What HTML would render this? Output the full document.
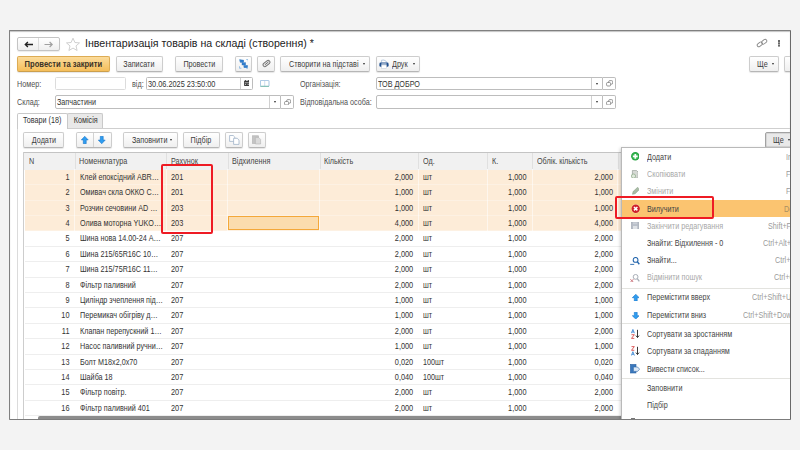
<!DOCTYPE html>
<html lang="uk"><head><meta charset="utf-8"><title>Інвентаризація товарів на складі</title>
<style>
html,body{margin:0;padding:0}
body{width:800px;height:450px;overflow:hidden;background:#f3f3f3;font-family:"Liberation Sans",sans-serif;font-size:8.3px;color:#3a3a3a;position:relative}
#win{position:absolute;left:9px;top:30px;width:780px;height:388px;border:1px solid #808080;border-right-color:#6a6a6a;border-bottom-color:#7c7c7c;box-shadow:inset 0 1px 1px #c4c4c4;background:#fff;overflow:hidden;border-radius:1px}
#in{position:absolute;left:-10px;top:-31px;width:800px;height:450px}
#in *{box-sizing:border-box}
.a{position:absolute;white-space:nowrap}
.btn{position:absolute;height:15.7px;top:56.1px;border:1px solid #cdcdcd;border-bottom-color:#b6b6b6;border-radius:2px;background:linear-gradient(#ffffff,#efefef);text-align:center;line-height:14.4px;white-space:nowrap;color:#3c3c3c;box-shadow:0 1px 1px rgba(0,0,0,.10)}
.btn.y{background:linear-gradient(#fcdc9c,#f5be5a);border-color:#ddac54;border-bottom-color:#cc9f4c;font-weight:bold;color:#3a3226}
.btn.t2{top:132.2px;height:15.4px;line-height:14.2px}
.lbl{position:absolute;white-space:nowrap;color:#505050;line-height:13px;margin-top:1px}
.fld{position:absolute;height:13.4px;border:1px solid #bdbdbd;border-radius:1.5px;background:#fff;line-height:12.8px;padding-left:1px;white-space:nowrap;color:#333}
.fb{position:absolute;height:13.4px;border:1px solid #bdbdbd;border-left:none;background:#fff;border-radius:0 2px 2px 0}
.dd{position:absolute;width:0;height:0;border-left:1.7px solid transparent;border-right:1.7px solid transparent;border-top:2.2px solid #2e2e2e}
#title{position:absolute;left:85px;top:35.4px;font-size:11.1px;line-height:17px;color:#1c1c1c;transform:scaleX(.957);transform-origin:0 50%;white-space:nowrap}
.tab{position:absolute;top:113.1px;height:14.6px;border:1px solid #c9c9c9;border-bottom:none;border-radius:2px 2px 0 0;line-height:13px;text-align:center;color:#333}
#hdr{position:absolute;left:23.4px;top:152.3px;width:770px;height:17.5px;background:#f1f1f1;border-top:1px solid #c4c4c4;border-left:1px solid #c4c4c4}
#hdr span{position:absolute;top:0;height:16px;line-height:16.2px;padding-left:3.6px;border-left:1px solid #e0e0e0;color:#444}
#hdr span:first-child{border-left:none;padding-left:4.6px}
.tr{position:absolute;left:24.5px;width:600px;height:15.4px;border-bottom:1px solid #eeeeee;background:#fff;line-height:15.4px;color:#333}
.tr.sel{background:#fdecd8;border-bottom-color:#fdf1e3}
.c{position:absolute;top:.1px;white-space:nowrap}
.n{left:0;width:44.5px;text-align:right}
.nm{left:55px}
.ac{left:146.5px}
.q{left:295px;width:93.2px;text-align:right}
.u{left:398px}
.k{left:462px;width:39.5px;text-align:right}
.oq{left:507px;width:81px;text-align:right}
#menu{position:absolute;left:620.5px;top:147px;width:200px;height:290px;background:#fff;border:1px solid #b9b9b9;box-shadow:-1px 1px 3px rgba(0,0,0,.18);z-index:4}
.mi{position:absolute;left:0;width:200px;height:17.2px;line-height:17.2px;color:#454545}
.mi .t{position:absolute;left:25.6px;top:.4px;white-space:nowrap}
.mi.d .t{color:#a8a8a8}
.mi .sk{position:absolute;top:.4px;color:#9a9a9a;white-space:nowrap}
#menu svg.ic{position:absolute}
.ms{position:absolute;left:0;width:200px;height:1px;background:#e3e3df}
.red{position:absolute;z-index:5;border:2px solid #ee1b24;border-radius:2px}
svg.a{z-index:3}

.x{display:inline-block;transform:scaleX(.868);transform-origin:50% 50%;font-style:normal;white-space:nowrap}
.x.l{transform-origin:0 50%}
.lbl,.c,.mi .t,.mi .sk{transform:scaleX(.868);transform-origin:0 50%}
.c.n,.c.ac,.c.q,.c.k,.c.oq,.x.dg{transform:scaleX(.885)}
.c.n,.c.q,.c.k,.c.oq{transform-origin:100% 50%}
.vs{position:absolute;top:169.3px;width:1px;height:62px;background:rgba(255,255,255,.55);z-index:1}
.hl{position:absolute;left:0;width:200px;height:17px;background:#fbc470}

</style></head><body>
<div id="win">
<div id="in">
<!-- title bar -->
<div class="a" style="left:17px;top:37px;width:42.6px;height:14px;border:1px solid #c4c4c4;border-radius:2px;background:linear-gradient(#fff,#efefef);box-shadow:0 1px 1px rgba(0,0,0,.08)"></div>
<div class="a" style="left:38px;top:38px;width:1px;height:12px;background:#dcdcdc"></div>
<svg class="a" style="left:23.600px;top:40.600px" width="9.500" height="7" viewBox="0 0 9.500 7"><path d="M9 3.500H1.600M3.900 1L1.300 3.500l2.600 2.500" fill="none" stroke="#222" stroke-width="1.350"/></svg>
<svg class="a" style="left:43.800px;top:40.600px" width="9.500" height="7" viewBox="0 0 9.500 7"><path d="M.5 3.500h7.400M5.600 1l2.600 2.500-2.600 2.500" fill="none" stroke="#a0a0a0" stroke-width="1.200"/></svg>
<svg class="a" style="left:64.900px;top:37px" width="16" height="15" viewBox="0 0 16 15"><path d="M8 1.2l1.9 4.3 4.6.4-3.5 3 1.1 4.6L8 11.1 3.9 13.5 5 8.9l-3.500-3 4.600-.4z" fill="#fff" stroke="#c9c9c9" stroke-width="0.9"/></svg>
<div id="title">Інвентаризація товарів на складі (створення) *</div>
<svg class="a" style="left:756px;top:38px" width="12" height="11" viewBox="0 0 13 12"><g fill="none" stroke="#8a8a8a" stroke-width="1"><rect x="1" y="5.2" width="6.200" height="3.600" rx="1.800" transform="rotate(-38 4 7)"/><rect x="5.800" y="2.200" width="6.200" height="3.600" rx="1.800" transform="rotate(-38 9 4)"/></g></svg>
<div class="a" style="left:777.800px;top:40.100px;width:2.200px;height:1.700px;background:#6a6a6a;box-shadow:0 2.300px 0 #6a6a6a,0 4.600px 0 #6a6a6a"></div>

<!-- command bar -->
<div class="btn y" style="left:17px;width:93.3px"><span class="x" style="transform:scaleX(.915)">Провести та закрити</span></div>
<div class="btn" style="left:115.6px;width:47px"><span class="x">Записати</span></div>
<div class="btn" style="left:174.6px;width:48.6px"><span class="x">Провести</span></div>
<div class="btn" style="left:234.8px;width:17.3px"></div>
<div class="btn" style="left:257.3px;width:17.3px"></div>
<div class="btn" style="left:280.2px;width:90px;text-align:left;padding-left:7.500px"><span class="x l">Створити на підставі</span></div>
<div class="dd" style="left:363px;top:63px"></div>
<div class="btn" style="left:375.6px;width:44.6px;text-align:left;padding-left:15.900px"><span class="x l">Друк</span></div>
<div class="dd" style="left:412.500px;top:63px"></div>
<div class="btn" style="left:749px;width:29.800px;text-align:left;padding-left:7px"><span class="x l">Ще</span></div>
<div class="dd" style="left:771.700px;top:63px"></div>
<div class="btn" style="left:784.3px;width:20px"></div>


<!-- icon: structure -->
<svg class="a" style="left:238.600px;top:59.300px" width="9.600" height="9.600" viewBox="0 0 9.600 9.600"><path d="M.4 2.400V.4h2M7.200.4h2v2M9.200 7.200v2h-2M2.400 9.200h-2v-2" fill="none" stroke="#7fb2e0" stroke-width=".8"/><g fill="#2f7fd0" stroke="#2a6cb8" stroke-width=".4"><rect x="1.100" y="1" width="3.600" height="2.300"/><rect x="3" y="3.700" width="3.600" height="2.300"/><rect x="4.900" y="6.400" width="3.600" height="2.300"/></g></svg>
<!-- icon: paperclip -->
<svg class="a" style="left:261.600px;top:59.400px" width="9" height="9" viewBox="0 0 9 9"><g transform="rotate(-40 4.500 4.500)"><rect x="0.600" y="2.700" width="7.800" height="3.600" rx="1.800" fill="#e6e6e6" stroke="#747474" stroke-width="1"/><path d="M2.600 4.500h4.400" stroke="#747474" stroke-width=".9"/></g></svg>
<!-- icon: printer -->
<svg class="a" style="left:379.300px;top:59px" width="10" height="10" viewBox="0 0 10 10"><path d="M2.600 3.600V1.200q2.400-1 4.800 1.300v1.100" fill="#fff" stroke="#9bb4d2" stroke-width=".7"/><rect x="0.400" y="3.600" width="9.200" height="4.200" rx="1.300" fill="#1f4f8f"/><rect x="2.500" y="6" width="5" height="3.600" fill="#fff" stroke="#b9c6d6" stroke-width=".5"/><rect x="2.400" y="4.500" width="5.200" height="1" fill="#fff"/></svg>
<!-- icon: calendar -->
<svg class="a" style="left:243.600px;top:80.300px" width="5.700" height="6" viewBox="0 0 6 6.500"><rect x="0" y="0.800" width="6" height="5.600" rx=".6" fill="#3a3a3a"/><rect x="0.900" y="0" width="1" height="1.600" fill="#3a3a3a"/><rect x="4.100" y="0" width="1" height="1.600" fill="#3a3a3a"/><rect x="0.800" y="2.700" width="4.400" height=".7" fill="#ddd"/><rect x="0.900" y="4.200" width="1.300" height="1.200" fill="#bbb"/><rect x="3.800" y="4.200" width="1.300" height="1.200" fill="#bbb"/></svg>
<!-- icon: book -->
<svg class="a" style="left:260px;top:80px" width="9.500" height="7" viewBox="0 0 9.500 7"><rect x="0.400" y="0.400" width="8.600" height="6" rx=".6" fill="#fff" stroke="#8fb6dc" stroke-width=".8"/><path d="M4.700 .6v5.600" stroke="#b9d0e8" stroke-width=".7"/><path d="M.4 6.300h8.600" stroke="#78c0a8" stroke-width=".9"/></svg>
<!-- open icons -->
<svg class="a" style="left:605.7px;top:80.4px" width="7.400" height="6.800" viewBox="0 0 8 7"><g fill="#fff" stroke="#7a7a7a" stroke-width=".85"><rect x="2.900" y=".5" width="4.400" height="3.800" rx="1.200"/><rect x=".6" y="2.500" width="4.400" height="3.800" rx="1.200"/></g></svg><svg class="a" style="left:605.7px;top:98.6px" width="7.400" height="6.800" viewBox="0 0 8 7"><g fill="#fff" stroke="#7a7a7a" stroke-width=".85"><rect x="2.900" y=".5" width="4.400" height="3.800" rx="1.200"/><rect x=".6" y="2.500" width="4.400" height="3.800" rx="1.200"/></g></svg><svg class="a" style="left:283.8px;top:98.7px" width="7.400" height="6.800" viewBox="0 0 8 7"><g fill="#fff" stroke="#7a7a7a" stroke-width=".85"><rect x="2.900" y=".5" width="4.400" height="3.800" rx="1.200"/><rect x=".6" y="2.500" width="4.400" height="3.800" rx="1.200"/></g></svg>

<!-- icon: arrows -->
<svg class="a" style="left:81px;top:136px" width="7.500" height="8" viewBox="0 0 7.500 8"><path d="M3.750.3L7.200 3.900H5.200V7.700H2.300V3.900H.3z" fill="#2f9df0" stroke="#1976c9" stroke-width=".6"/></svg>
<svg class="a" style="left:98.300px;top:136px" width="7.500" height="8" viewBox="0 0 7.500 8"><path d="M3.750 7.700L7.200 4.100H5.200V.3H2.300V4.100H.3z" fill="#2f9df0" stroke="#1976c9" stroke-width=".6"/></svg>
<!-- icon: copy -->
<svg class="a" style="left:228.500px;top:135px" width="11" height="10" viewBox="0 0 11 10"><g fill="#fff" stroke="#9fb3c8" stroke-width=".8"><path d="M.6.500h3.600l1.600 1.600v4.300H.6z"/><path d="M4.600 3.300h3.600l1.800 1.800v4.300H4.600z"/></g></svg>
<!-- icon: paste disabled -->
<svg class="a" style="left:252px;top:135px" width="9.500" height="9.500" viewBox="0 0 9.500 9.500"><rect x=".5" y=".8" width="6" height="7.600" fill="#c4c4c4" stroke="#aeaeae" stroke-width=".6"/><path d="M3.400 2.400h3.200l2 2v4.600H3.400z" fill="#dadada" stroke="#b4b4b4" stroke-width=".6"/></svg>

<!-- form row 1 -->
<div class="lbl" style="left:17px;top:77.3px">Номер:</div>
<div class="fld" style="left:54.600px;top:77px;width:71.400px;border-color:#dcdcdc"></div>
<div class="lbl" style="left:132px;top:77.3px">від:</div>
<div class="fld" style="left:146.200px;top:77px;width:106.400px;padding-left:.6px"><span class="x l dg">30.06.2025 23:50:00</span></div>
<div class="a" style="left:240px;top:78px;width:1px;height:11.4px;background:#d0d0d0"></div>
<div class="lbl" style="left:300px;top:77.3px">Організація:</div>
<div class="fld" style="left:376px;top:77px;width:227.300px;border-radius:2px 0 0 2px"><span class="x l">ТОВ ДОБРО</span></div>
<div class="a" style="left:591.200px;top:78px;width:1px;height:11.4px;background:#d0d0d0"></div>
<div class="dd" style="left:595.700px;top:82.600px"></div>
<div class="fb" style="left:603.300px;top:77px;width:12.500px"></div>

<!-- form row 2 -->
<div class="lbl" style="left:17px;top:94.700px">Склад:</div>
<div class="fld" style="left:54.500px;top:95px;width:226.800px;height:13.700px;border-radius:2px 0 0 2px"><span class="x l">Запчастини</span></div>
<div class="a" style="left:269.400px;top:96.4px;width:1px;height:11.4px;background:#d0d0d0"></div>
<div class="dd" style="left:273.700px;top:101px"></div>
<div class="fb" style="left:281.300px;top:95px;width:12.600px;height:13.700px"></div>
<div class="lbl" style="left:300px;top:94.700px">Відповідальна особа:</div>
<div class="fld" style="left:376px;top:95.2px;width:227.300px;height:13.500px;border-radius:2px 0 0 2px"></div>
<div class="a" style="left:591.200px;top:96.4px;width:1px;height:11.4px;background:#d0d0d0"></div>
<div class="dd" style="left:595.700px;top:101px"></div>
<div class="fb" style="left:603.300px;top:95.2px;width:12.500px;height:13.500px"></div>

<!-- tabs -->
<div class="a" style="left:17px;top:127.600px;width:780px;height:1px;background:#cfcfcf"></div>
<div class="a" style="left:16.800px;top:127.600px;width:1.200px;height:300px;background:#dbdbdb"></div>
<div class="tab" style="left:67.3px;width:36px;background:#e9e9e9"><span class="x">Комісія</span></div>
<div class="tab" style="left:17px;width:51px;background:#fff;height:15.700px"><span class="x">Товари (18)</span></div>

<!-- table toolbar -->
<div class="btn t2" style="left:23.300px;width:40.600px"><span class="x">Додати</span></div>
<div class="btn t2" style="left:76px;width:35.6px"></div>
<div class="a" style="left:93.2px;top:133.2px;width:1px;height:13.4px;background:#d2d2d2"></div>
<div class="btn t2" style="left:123px;width:54.6px;text-align:left;padding-left:7.500px"><span class="x l">Заповнити</span></div>
<div class="dd" style="left:170px;top:139.2px"></div>
<div class="btn t2" style="left:182.8px;width:36.8px"><span class="x">Підбір</span></div>
<div class="btn t2" style="left:225.2px;width:17.6px"></div>
<div class="btn t2" style="left:248px;width:17.6px"></div>
<div class="btn t2" style="left:765.300px;width:40px;background:#e9e9e9;border-color:#a2a2a2;text-align:left;padding-left:6.900px;box-shadow:inset 0 0 0 1px #d6d6d6"><span class="x l">Ще</span></div>
<div class="dd" style="left:788.200px;top:139.200px"></div>

<!-- table header -->
<div id="hdr">
<span style="left:0;width:50.5px"><i class="x l">N</i></span>
<span style="left:50.3px;width:92px"><i class="x l">Номенклатура</i></span>
<span style="left:141.8px;width:62px"><i class="x l">Рахунок</i></span>
<span style="left:203.5px;width:92px"><i class="x l">Відхилення</i></span>
<span style="left:295.5px;width:98px"><i class="x l">Кількість</i></span>
<span style="left:393.8px;width:69px"><i class="x l">Од.</i></span>
<span style="left:462.8px;width:45px"><i class="x l">К.</i></span>
<span style="left:507.800px;width:86px"><i class="x l">Облік. кількість</i></span>
<span style="left:593.3px;width:180px"></span>
</div>

<div id="rows">
<div class="tr sel" style="top:169.80px"><span class="c n">1</span><span class="c nm">Клей епоксідний ABR…</span><span class="c ac">201</span><span class="c q">2,000</span><span class="c u">шт</span><span class="c k">1,000</span><span class="c oq">2,000</span></div>
<div class="tr sel" style="top:185.20px"><span class="c n">2</span><span class="c nm">Омивач скла ОККО С…</span><span class="c ac">201</span><span class="c q">1,000</span><span class="c u">шт</span><span class="c k">1,000</span><span class="c oq">1,000</span></div>
<div class="tr sel" style="top:200.60px"><span class="c n">3</span><span class="c nm">Розчин сечовини AD …</span><span class="c ac">203</span><span class="c q">1,000</span><span class="c u">шт</span><span class="c k">1,000</span><span class="c oq">1,000</span></div>
<div class="tr sel" style="top:216.00px"><span class="c n">4</span><span class="c nm">Олива моторна YUKO…</span><span class="c ac">203</span><span class="c q">4,000</span><span class="c u">шт</span><span class="c k">1,000</span><span class="c oq">4,000</span></div>
<div class="tr" style="top:231.40px"><span class="c n">5</span><span class="c nm">Шина нова 14.00-24 A…</span><span class="c ac">207</span><span class="c q">2,000</span><span class="c u">шт</span><span class="c k">1,000</span><span class="c oq">2,000</span></div>
<div class="tr" style="top:246.80px"><span class="c n">6</span><span class="c nm">Шина 215/65R16C 10…</span><span class="c ac">207</span><span class="c q">2,000</span><span class="c u">шт</span><span class="c k">1,000</span><span class="c oq">2,000</span></div>
<div class="tr" style="top:262.20px"><span class="c n">7</span><span class="c nm">Шина 215/75R16C 11…</span><span class="c ac">207</span><span class="c q">2,000</span><span class="c u">шт</span><span class="c k">1,000</span><span class="c oq">2,000</span></div>
<div class="tr" style="top:277.60px"><span class="c n">8</span><span class="c nm">Фільтр паливний</span><span class="c ac">207</span><span class="c q">2,000</span><span class="c u">шт</span><span class="c k">1,000</span><span class="c oq">2,000</span></div>
<div class="tr" style="top:293.00px"><span class="c n">9</span><span class="c nm">Циліндр зчеплення під…</span><span class="c ac">207</span><span class="c q">1,000</span><span class="c u">шт</span><span class="c k">1,000</span><span class="c oq">1,000</span></div>
<div class="tr" style="top:308.40px"><span class="c n">10</span><span class="c nm">Перемикач обігріву д…</span><span class="c ac">207</span><span class="c q">1,000</span><span class="c u">шт</span><span class="c k">1,000</span><span class="c oq">1,000</span></div>
<div class="tr" style="top:323.80px"><span class="c n">11</span><span class="c nm">Клапан перепускний 1…</span><span class="c ac">207</span><span class="c q">2,000</span><span class="c u">шт</span><span class="c k">1,000</span><span class="c oq">2,000</span></div>
<div class="tr" style="top:339.20px"><span class="c n">12</span><span class="c nm">Насос паливний ручни…</span><span class="c ac">207</span><span class="c q">1,000</span><span class="c u">шт</span><span class="c k">1,000</span><span class="c oq">1,000</span></div>
<div class="tr" style="top:354.60px"><span class="c n">13</span><span class="c nm">Болт M18x2,0x70</span><span class="c ac">207</span><span class="c q">0,020</span><span class="c u">100шт</span><span class="c k">1,000</span><span class="c oq">0,020</span></div>
<div class="tr" style="top:370.00px"><span class="c n">14</span><span class="c nm">Шайба 18</span><span class="c ac">207</span><span class="c q">0,040</span><span class="c u">100шт</span><span class="c k">1,000</span><span class="c oq">0,040</span></div>
<div class="tr" style="top:385.40px"><span class="c n">15</span><span class="c nm">Фільтр повітр.</span><span class="c ac">207</span><span class="c q">2,000</span><span class="c u">шт</span><span class="c k">1,000</span><span class="c oq">2,000</span></div>
<div class="tr" style="top:400.80px"><span class="c n">16</span><span class="c nm">Фільтр паливний 401</span><span class="c ac">207</span><span class="c q">2,000</span><span class="c u">шт</span><span class="c k">1,000</span><span class="c oq">2,000</span></div>
</div>
<div class="vs" style="left:74.2px"></div><div class="vs" style="left:165.7px"></div><div class="vs" style="left:227.4px"></div><div class="vs" style="left:319.4px"></div><div class="vs" style="left:417.7px"></div><div class="vs" style="left:486.7px"></div><div class="vs" style="left:531.7px"></div><div class="vs" style="left:617.2px"></div>
<!-- active cell -->
<div class="a" style="left:228px;top:216px;width:91.3px;height:13.6px;background:#fbdcae;border:1px solid #f4a83a;z-index:2"></div>
<!-- h scrollbar -->
<div class="a" style="left:37.5px;top:415.6px;width:590px;height:4px;background:#8c8c8c;border-radius:2px 0 0 0;z-index:2"></div>
<div class="a" style="left:23.4px;top:152.3px;width:1px;height:270px;background:#cdcdcd"></div>
<div class="red" style="left:161.2px;top:164.1px;width:51.5px;height:69.8px"></div>
<div id="menu">
<div class="hl" style="top:51.70px"></div>
<div class="mi" style="top:0.15px"><span class="t">Додати</span><span class="sk" style="left:164.8px">Ins</span></div>
<svg class="ic" style="left:9.20px;top:4.40px" width="8.6" height="8.6" viewBox="0 0 8.6 8.6"><circle cx="4.300" cy="4.300" r="4.200" fill="#25a541"/><circle cx="4.300" cy="4.300" r="3.100" fill="#3db957"/><path d="M4.300 1.900v4.800M1.900 4.300h4.800" stroke="#fff" stroke-width="1.700"/></svg>
<div class="mi d" style="top:17.90px"><span class="t">Скопіювати</span><span class="sk" style="left:164.8px">F9</span></div>
<svg class="ic" style="left:9.40px;top:21.60px" width="7.6" height="8.6" viewBox="0 0 7.6 8.6"><path d="M1.400.400h4l1.800 1.800v6H1.400z" fill="#d5d8d4" stroke="#a0a6a1" stroke-width=".8"/><circle cx="2.500" cy="6.100" r="2.100" fill="#dfe9dc" stroke="#94ad8f" stroke-width=".8"/></svg>
<div class="mi d" style="top:34.90px"><span class="t">Змінити</span><span class="sk" style="left:164.8px">F2</span></div>
<svg class="ic" style="left:10.10px;top:39.00px" width="7.8" height="7.8" viewBox="0 0 7.8 7.8"><path d="M.500 7.300l.600-2.700L5.600.300l2 2-4.500 4.400z" fill="#a9bca6" stroke="#8fa48c" stroke-width=".6"/></svg>
<div class="mi" style="top:52.15px"><span class="t">Вилучити</span><span class="sk" style="left:162.8px;color:#a98f63">Del</span></div>
<svg class="ic" style="left:9.20px;top:56.30px" width="9.4" height="9.4" viewBox="0 0 9.4 9.4"><circle cx="4.700" cy="4.700" r="4.700" fill="#fbe3a8"/><circle cx="4.700" cy="4.700" r="4.200" fill="#cf1f2b"/><path d="M3 3l3.400 3.400M6.400 3L3 6.400" stroke="#fff" stroke-width="1.500"/></svg>
<div class="mi d" style="top:69.65px"><span class="t">Закінчити редагування</span><span class="sk" style="left:146.5px">Shift+F2</span></div>
<svg class="ic" style="left:9.55px;top:73.90px" width="8.3" height="7.4" viewBox="0 0 8.3 7.4"><rect x=".3" y=".3" width="7.700" height="6.800" fill="#b6bcc6" stroke="#a3aab5" stroke-width=".6"/><rect x="2" y="3.900" width="4.300" height="3.200" fill="#dfe2e6"/><rect x="2" y=".3" width="4.300" height="2" fill="#c9ced6"/></svg>
<div class="mi" style="top:86.65px"><span class="t">Знайти: Відхилення - 0</span><span class="sk" style="left:141.0px">Ctrl+Alt+F</span></div>
<div class="mi" style="top:103.90px"><span class="t">Знайти...</span><span class="sk" style="left:153.5px">Ctrl+F</span></div>
<svg class="ic" style="left:8.50px;top:108.60px" width="9.8" height="8.2" viewBox="0 0 9.8 8.2"><circle cx="5.600" cy="2.900" r="2.400" fill="#fff" stroke="#2466ad" stroke-width="1.100"/><path d="M7.300 4.700l2 2.600" stroke="#2466ad" stroke-width="1.400"/><path d="M.200 7.400h4" stroke="#2466ad" stroke-width=".9"/></svg>
<div class="mi d" style="top:120.90px"><span class="t">Відмінити пошук</span><span class="sk" style="left:152.5px">Ctrl+Q</span></div>
<svg class="ic" style="left:8.50px;top:125.80px" width="9.8" height="8.6" viewBox="0 0 9.8 8.6"><circle cx="5.600" cy="2.900" r="2.400" fill="#fff" stroke="#a7adb6" stroke-width="1"/><path d="M7.300 4.700l2 2.600" stroke="#a7adb6" stroke-width="1.300"/><path d="M.400 5.200l3 3M3.400 5.200l-3 3" stroke="#c76a72" stroke-width=".9"/></svg>
<div class="ms" style="top:139.50px"></div>
<div class="mi" style="top:140.90px"><span class="t">Перемістити вверх</span><span class="sk" style="left:130.5px">Ctrl+Shift+Up</span></div>
<svg class="ic" style="left:10.35px;top:146.10px" width="7.5" height="7.4" viewBox="0 0 7.5 7.4"><path d="M3.750.300L7.200 3.700H5.200V7.100H2.300V3.700H.300z" fill="#2f9df0" stroke="#1976c9" stroke-width=".6"/></svg>
<div class="mi" style="top:158.40px"><span class="t">Перемістити вниз</span><span class="sk" style="left:121.0px">Ctrl+Shift+Down</span></div>
<svg class="ic" style="left:10.35px;top:163.60px" width="7.5" height="7.4" viewBox="0 0 7.5 7.4"><path d="M3.750 7.100L7.200 3.700H5.200V.300H2.300V3.700H.300z" fill="#2f9df0" stroke="#1976c9" stroke-width=".6"/></svg>
<div class="ms" style="top:175.25px"></div>
<div class="mi" style="top:177.65px"><span class="t">Сортувати за зростанням</span></div>
<svg class="ic" style="left:9.40px;top:181.00px" width="9" height="10" viewBox="0 0 9 10"><path d="M.400 4.200L1.900.400l1.500 3.800M.900 3h2" stroke="#2f7fd0" stroke-width=".8" fill="none"/><path d="M.500 5.700h2.800L.500 9.400h2.800" stroke="#d43a3a" stroke-width=".8" fill="none"/><path d="M6.500.800v7.600M4.900 6.600l1.600 1.900 1.600-1.900" stroke="#222" stroke-width=".9" fill="none"/></svg>
<div class="mi" style="top:194.90px"><span class="t">Сортувати за спаданням</span></div>
<svg class="ic" style="left:9.40px;top:197.70px" width="9" height="10" viewBox="0 0 9 10"><path d="M.500.600h2.800L.500 4.300h2.800" stroke="#d43a3a" stroke-width=".8" fill="none"/><path d="M.400 9.500l1.500-3.800 1.500 3.800M.900 8.300h2" stroke="#2f7fd0" stroke-width=".8" fill="none"/><path d="M6.500.800v7.600M4.900 6.600l1.600 1.900 1.600-1.900" stroke="#222" stroke-width=".9" fill="none"/></svg>
<div class="mi" style="top:212.15px"><span class="t">Вивести список...</span></div>
<svg class="ic" style="left:8.50px;top:216.05px" width="10" height="9.5" viewBox="0 0 10 9.5"><rect x=".4" y=".4" width="5.600" height="8.600" fill="#3a78bd" stroke="#2c64a4" stroke-width=".6"/><path d="M3.400 3h4.200l2 2.200-2 2.200H3.400z" fill="#dbe8f6" stroke="#2c64a4" stroke-width=".6"/></svg>
<div class="ms" style="top:229.75px"></div>
<div class="mi" style="top:231.65px"><span class="t">Заповнити</span></div>
<div class="mi" style="top:248.90px"><span class="t">Підбір</span></div>
<div style="position:absolute;left:9.5px;top:269.6px;width:3.5px;height:1.5px;background:#777"></div>
</div>
<div class="red" style="left:615px;top:196px;width:98.8px;height:23.4px"></div>
</div>

</div>
</body></html>
